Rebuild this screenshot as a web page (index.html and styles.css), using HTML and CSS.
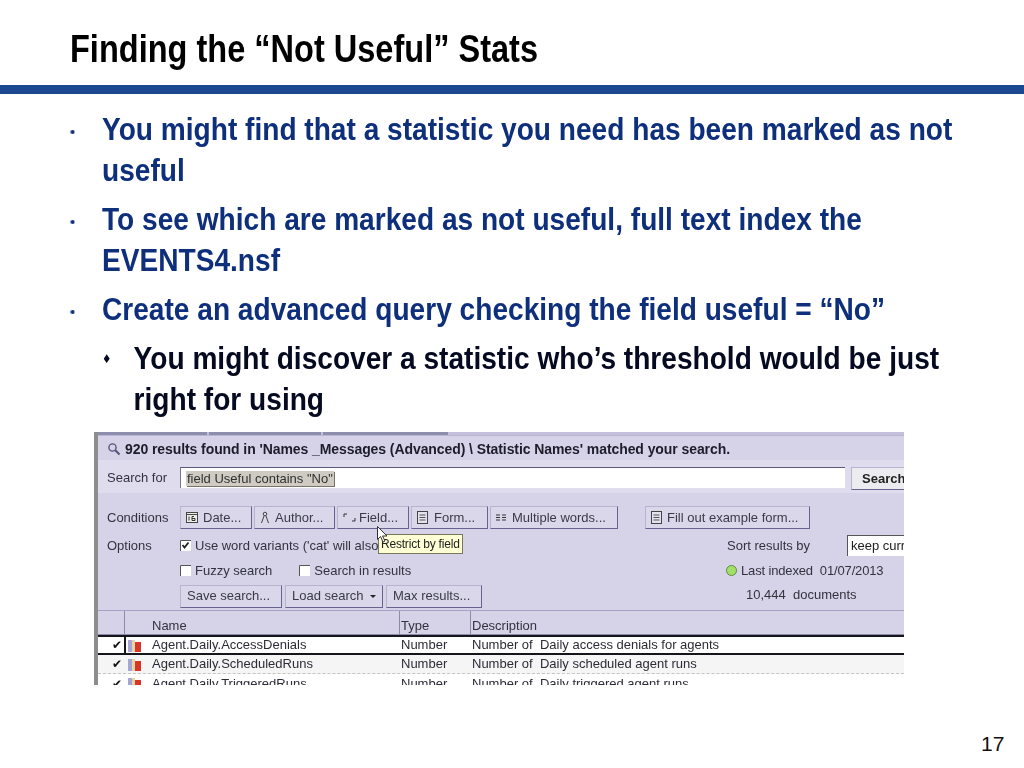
FILE: index.html
```html
<!DOCTYPE html>
<html lang="en">
<head>
<meta charset="utf-8">
<title>Finding the “Not Useful” Stats</title>
<link rel="stylesheet" href="styles.css">
</head>
<body>
<main class="slide">
  <h1 class="title">Finding the “Not Useful” Stats</h1>
  <div class="rule"></div>
  <ul class="bullets">
    <li>You might find that a statistic you need has been marked as not useful</li>
    <li>To see which are marked as not useful, full text index the EVENTS4.nsf</li>
    <li>Create an advanced query checking the field useful = “No”
      <ul class="sub">
        <li>You might discover a statistic who’s threshold would be just right for using</li>
      </ul>
    </li>
  </ul>

  <section class="shot">
    <div class="tabs"><span class="tab t1"></span><span class="tab t2"></span><span class="tab t3"></span></div>
    <div class="results">
      <svg class="ico-search" width="14" height="14" viewBox="0 0 14 14"><circle cx="5.5" cy="5.5" r="3.6" fill="none" stroke="#55557a" stroke-width="1.4"/><path d="M8.3 8.3l4.2 4.2" stroke="#55557a" stroke-width="2"/></svg>
      <b>920 results found in 'Names _Messages (Advanced) \ Statistic Names' matched your search.</b>
    </div>
    <div class="search-band">
      <span class="label">Search for</span>
      <div class="input"><span class="query">field Useful contains "No"</span></div>
      <span class="btn search-btn"><b>Search</b></span>
    </div>
    <div class="panel">
      <div class="cond-row">
        <span class="label">Conditions</span>
        <span class="btn w-date"><svg width="12" height="11" viewBox="0 0 12 11"><rect x=".5" y=".5" width="11" height="10" fill="#eee" stroke="#444"/><path d="M.5 2.5h11" stroke="#444"/><path d="M3 4.5v4M6 4.5H8M6 4.5v4h3v-2H6" fill="none" stroke="#333"/></svg>Date...</span>
        <span class="btn w-author"><svg width="10" height="13" viewBox="0 0 10 13"><circle cx="5" cy="3" r="1.8" fill="none" stroke="#444"/><path d="M4 5L1.5 12M6 5l2.5 7" fill="none" stroke="#444"/></svg>Author...</span>
        <span class="btn w-field"><svg width="13" height="9" viewBox="0 0 13 9"><path d="M1 4V1h3M9 8h3V5" fill="none" stroke="#333"/></svg>Field...</span>
        <span class="btn w-form"><svg width="11" height="13" viewBox="0 0 11 13"><rect x=".5" y=".5" width="10" height="12" fill="#e4e2ee" stroke="#444"/><path d="M2.5 4h6M2.5 6.500h6M2.500 9h6" stroke="#555"/></svg>Form...</span>
        <span class="btn w-multi"><svg width="10" height="7" viewBox="0 0 10 7"><path d="M0 1h4M6 1h4M0 3.500h4M6 3.500h4M0 6h4M6 6h4" stroke="#333"/></svg>Multiple words...</span>
        <span class="btn w-fill"><svg width="11" height="13" viewBox="0 0 11 13"><rect x=".5" y=".5" width="10" height="12" fill="#e4e2ee" stroke="#444"/><path d="M2.500 4h6M2.500 6.500h6M2.500 9h6" stroke="#555"/></svg>Fill out example form...</span>
      </div>
      <div class="opt-grid">
        <span class="label">Options</span>
        <label class="check"><svg class="box" width="11" height="11" viewBox="0 0 11 11"><rect width="11" height="11" fill="#fff"/><path d="M.5 11V.5H11" fill="none" stroke="#555"/><path d="M2.500 5l2 2.500 4-5" fill="none" stroke="#222" stroke-width="1.800"/></svg>Use word variants ('cat' will also</label>
        <div class="sort"><span class="sort-label">Sort results by</span><span class="select">keep curr</span></div>

        <span></span>
        <div class="checks">
          <label class="check"><svg class="box" width="11" height="11" viewBox="0 0 11 11"><rect width="11" height="11" fill="#fff"/><path d="M.5 11V.5H11" fill="none" stroke="#555"/></svg>Fuzzy search</label>
          <label class="check"><svg class="box" width="11" height="11" viewBox="0 0 11 11"><rect width="11" height="11" fill="#fff"/><path d="M.5 11V.5H11" fill="none" stroke="#555"/></svg>Search in results</label>
        </div>
        <div class="indexed"><i class="dot"></i>Last indexed&nbsp; 01/07/2013</div>

        <span></span>
        <div class="actions">
          <span class="btn w-save">Save search...</span>
          <span class="btn w-load">Load search<i class="caret"></i></span>
          <span class="btn w-max">Max results...</span>
        </div>
        <div class="docs">10,444&nbsp; documents</div>
      </div>
      <div class="tip">Restrict by field</div>
      <svg class="cursor" width="11" height="17" viewBox="0 0 11 17"><path d="M.5.500v13l3-3 2.500 5.500 2-1-2.500-5H10z" fill="#fff" stroke="#333"/></svg>
    </div>
    <div class="thead">
      <span class="th-check"></span><span class="th name">Name</span><span class="th">Type</span><span class="th">Description</span>
    </div>
    <div class="row current">
      <span class="tick">✔</span>
      <span class="cell name"><svg width="14" height="13" viewBox="0 0 14 13"><rect width="4" height="12" y="1" fill="#a6a6d6"/><rect x="4" width="3" height="12" y="1" fill="#e8d6a0"/><rect x="7" width="6" height="10" y="3" fill="#d8352a"/></svg>Agent.Daily.AccessDenials</span>
      <span class="cell">Number</span><span class="cell">Number of&nbsp; Daily access denials for agents</span>
    </div>
    <div class="row alt">
      <span class="tick">✔</span>
      <span class="cell name"><svg width="14" height="13" viewBox="0 0 14 13"><rect width="4" height="12" y="1" fill="#a6a6d6"/><rect x="4" width="3" height="12" y="1" fill="#e8d6a0"/><rect x="7" width="6" height="10" y="3" fill="#d8352a"/></svg>Agent.Daily.ScheduledRuns</span>
      <span class="cell">Number</span><span class="cell">Number of&nbsp; Daily scheduled agent runs</span>
    </div>
    <div class="row">
      <span class="tick">✔</span>
      <span class="cell name"><svg width="14" height="13" viewBox="0 0 14 13"><rect width="4" height="12" y="1" fill="#a6a6d6"/><rect x="4" width="3" height="12" y="1" fill="#e8d6a0"/><rect x="7" width="6" height="10" y="3" fill="#d8352a"/></svg>Agent.Daily.TriggeredRuns</span>
      <span class="cell">Number</span><span class="cell">Number of&nbsp; Daily triggered agent runs</span>
    </div>
  </section>
  <div class="page">17</div>
</main>
</body>
</html>
```

FILE: styles.css
```css
* { box-sizing: border-box; }
html, body { margin: 0; padding: 0; background: #fff; }
.slide {
  width: 1024px; height: 768px; overflow: hidden; background: #fff; position: relative;
  display: flex; flex-direction: column; align-items: flex-start;
  font-family: "Liberation Sans", Arial, sans-serif;
}
.title {
  margin: 0 0 0 70px; height: 85px; padding: 28px 0 0 0; white-space: nowrap; flex: none;
  font: bold 39px/41px "Liberation Sans", sans-serif;
  transform: scaleX(.834); transform-origin: 0 0;
  color: #000;
}
.rule { height: 9px; width: 100%; background: #1c4892; flex: none; }
.bullets, .sub { list-style: none; margin: 0; padding: 0; }
.bullets {
  margin-left: 102px; width: 1000px; flex: none; padding-top: 15px; color: #0e2f7c;
  font: bold 32px/41px "Liberation Sans", sans-serif;
  transform: scaleX(.878); transform-origin: 0 0;
}
.bullets > li { position: relative; margin-bottom: 8px; }
.bullets > li::before {
  content: ""; position: absolute; left: -36px; top: 21px;
  width: 5px; height: 4px; border-radius: 50%; background: #0e2f7c;
}
.sub { color: #050a20; padding-left: 36px; margin-top: 8px; }
.sub li { position: relative; }
.sub li::before {
  content: "♦"; position: absolute; left: -36px; top: 1px;
  font: 12px/41px "DejaVu Sans", sans-serif; color: #050a20;
}

/* embedded application screenshot */
.shot {
  flex: none; width: 810px; height: 253px; margin: 4px 0 0 94px; overflow: hidden;
  background: #d6d2e8; border-left: 4px solid #8d8d8f;
  font: 13px/16px "Liberation Sans", Arial, sans-serif; color: #33333f;
  filter: blur(.3px);
}
.tabs { height: 3px; display: flex; gap: 2px; background: #c3bfdc; }
.tab { height: 3px; background: #8d8dae; }
.t1 { width: 109px; } .t2 { width: 112px; } .t3 { width: 125px; }
.results {
  height: 25px; padding: 2px 0 0 9px; display: flex; align-items: center; gap: 4px;
  color: #1c1c2a; border-top: 1px solid #b9b6d2; font-size: 14px; white-space: nowrap;
}
.results b { letter-spacing: -.08px; }
.search-band {
  height: 33px; display: flex; align-items: flex-start; padding: 7px 0 0 9px;
  background: #dfdcee;
}
.label { width: 73px; flex: none; color: #33333f; }
.search-band .label { padding-top: 3px; }
.input {
  width: 665px; height: 21px; flex: none; background: #fff; padding: 3px 0 0 5px;
  border-top: 1px solid #5c5a78; border-left: 1px solid #77758f;
}
.query { background: #cfcbc2; color: #303030; padding: 0 1px; box-shadow: 1px 1px 0 #77756a; display: inline-block; line-height: 15px; }
.btn {
  display: flex; align-items: center; gap: 3px; height: 23px; padding: 0 0 0 5px; flex: none;
  background: #dad7ea; color: #3a3a48; white-space: nowrap;
  border: 1px solid #8f8cb4; border-right-color: #66648e; border-bottom-color: #66648e;
  border-top-color: #b7b4d0; border-left-color: #b7b4d0;
}
.search-btn {
  width: 53px; margin-left: 6px; background: #ebebf0; border-right: 0; padding-left: 10px;
  color: #222; overflow: hidden;
}
.panel { position: relative; padding: 13px 0 0 9px; height: 118px; border-bottom: 1px solid #a6a3c4; }
.cond-row { display: flex; align-items: center; height: 23px; }
.cond-row .btn + .btn { margin-left: 2px; }
.w-date { width: 72px; } .w-date svg { margin-right: 2px; }
.w-author { width: 81px; } .w-author svg { margin-right: 2px; }
.w-field { width: 72px; } .w-form { width: 77px; } .w-form svg { margin-right: 3px; }
.w-multi { width: 128px; } .w-multi svg { margin-right: 3px; }
.cond-row .btn.w-fill { width: 165px; margin-left: 27px; } .w-fill svg { margin-right: 2px; }
.opt-grid {
  display: grid; grid-template-columns: 73px 546px 1fr;
  grid-template-rows: 25px 25px 26px; margin-top: 4px; align-items: center;
}
.check { display: flex; align-items: center; gap: 4px; white-space: nowrap; }
.box { flex: none; }
.checks { display: flex; gap: 27px; }
.sort { display: flex; align-items: center; padding-left: 1px; }
.sort-label { width: 120px; white-space: nowrap; }
.select {
  background: #fff; border-top: 1px solid #555; border-left: 1px solid #555;
  width: 60px; height: 21px; line-height: 19px; padding-left: 3px; overflow: hidden; color: #222; white-space: nowrap;
}
.indexed { display: flex; align-items: center; gap: 4px; white-space: nowrap; letter-spacing: -.15px; }
.dot { width: 11px; height: 11px; border-radius: 50%; background: #a3e06a; border: 1px solid #5d8a45; flex: none; }
.docs { padding-left: 20px; margin-top: -2px; }
.actions { display: flex; gap: 3px; }
.actions .btn { padding-left: 6px; }
.w-save { width: 102px; } .w-load { width: 98px; } .w-max { width: 96px; }
.actions .w-load { gap: 6px; }
.caret { width: 0; height: 0; border: 3px solid transparent; border-top-color: #222; border-bottom: 0; }
.tip {
  position: absolute; left: 280px; top: 41px; height: 20px; padding: 1px 2px 0;
  background: #ffffd6; border: 1px solid #77775c; color: #222; font-size: 12px; letter-spacing: -.2px; white-space: nowrap;
}
.cursor { position: absolute; left: 279px; top: 33px; }
.thead {
  height: 24px; display: grid; grid-template-columns: 26px 275px 71px 1fr; align-items: center;
  border-bottom: 1px solid #8e8ba8;
}
.th { height: 100%; padding: 7px 0 0 1px; border-left: 1px solid #8e8ba8; }
.th.name { padding-left: 27px; }
.row {
  height: 19px; display: grid; grid-template-columns: 26px 275px 71px 1fr; align-items: center;
  background: #fff; color: #2c2c36; white-space: nowrap;
}
.current { border-top: 2px solid #15151c; border-bottom: 2px solid #15151c; height: 20px; }
.alt { background: #f5f5f5; border-bottom: 1px dashed #c4c4c4; }
.tick { font: 12px/16px "DejaVu Sans", sans-serif; color: #111; padding-left: 14px; white-space: nowrap; }
.cell { padding-left: 2px; }
.cell.name { display: flex; align-items: center; gap: 10px; padding-left: 4px; }
.row.current .name { border-left: 2px solid #15151c; height: 100%; padding-left: 2px; }
.page {
  position: absolute; left: 981px; top: 732px;
  font: 21px/24px "Liberation Sans", Arial, sans-serif; color: #111;
}
```
